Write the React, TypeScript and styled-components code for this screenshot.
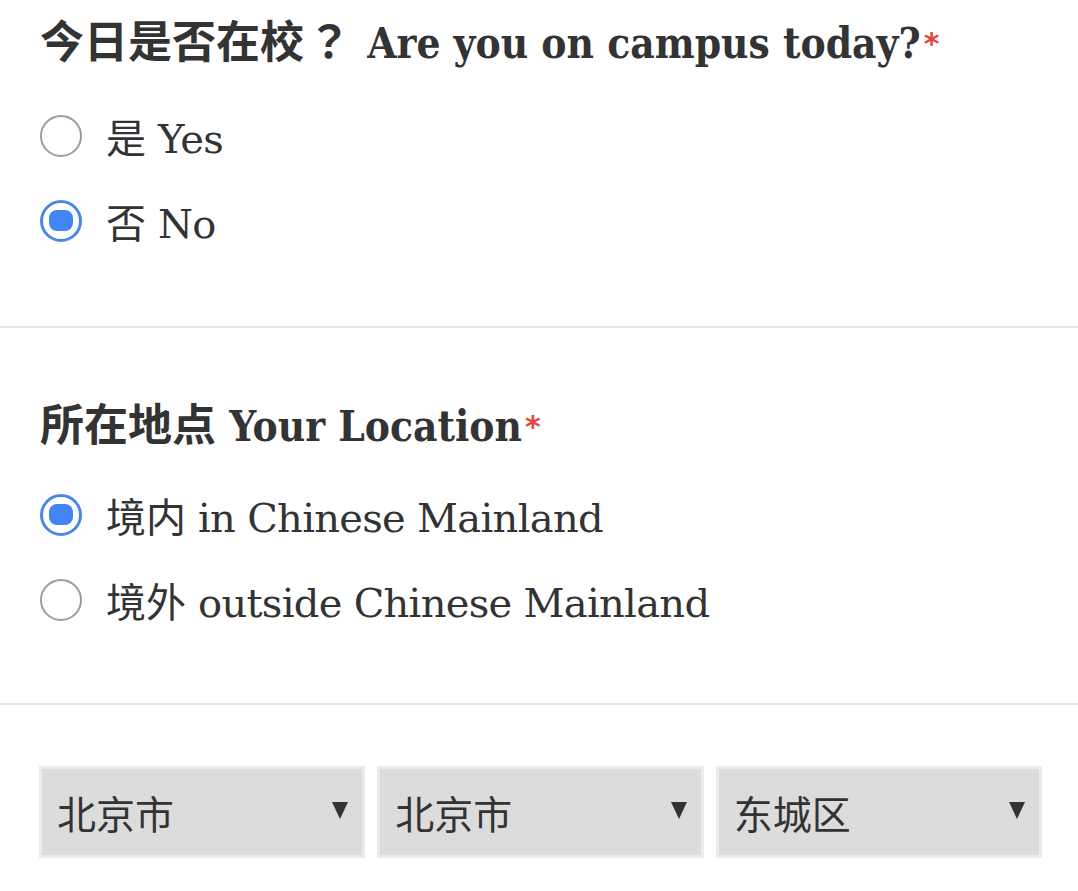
import React, { FC } from 'react';
import styled, { createGlobalStyle } from 'styled-components';

const GlobalStyle = createGlobalStyle`
  html, body {
    margin: 0;
    padding: 0;
    background: #ffffff;
  }
  body {
    font-family: "DejaVu Serif", "Noto Sans CJK SC", serif;
    color: #333333;
  }
`;

const Page = styled.div`
  width: 1078px;
  display: flex;
  flex-direction: column;
`;

const Section = styled.div<{ $top: number; $bottom: number }>`
  padding: ${(p) => p.$top}px 40px ${(p) => p.$bottom}px 40px;
  display: flex;
  flex-direction: column;
`;

const Divider = styled.div`
  height: 2px;
  background: #e6e6e6;
`;

const Title = styled.div<{ $gap: number }>`
  font-family: "DejaVu Serif Condensed", "DejaVu Serif", "Noto Sans CJK SC", serif;
  font-stretch: condensed;
  font-weight: bold;
  font-size: 42px;
  line-height: 50px;
  height: 50px;
  white-space: nowrap;
  letter-spacing: 0;
  margin-bottom: ${(p) => p.$gap}px;
`;

const Cjk = styled.span<{ $size: number; $bold?: boolean }>`
  font-family: "Noto Sans CJK SC", sans-serif;
  font-stretch: normal;
  font-size: ${(p) => p.$size}px;
  font-weight: ${(p) => (p.$bold ? 700 : 400)};
  letter-spacing: 0;
`;

const FullMark = styled.span`
  font-family: "Noto Sans CJK JP", sans-serif;
  font-stretch: normal;
  font-size: 44px;
  font-weight: 700;
  letter-spacing: 0;
  margin-left: 3px;
  margin-right: 3px;
`;

const Star = styled.span`
  color: #e2483d;
  font-family: "DejaVu Sans", sans-serif;
  font-stretch: normal;
  font-weight: bold;
  font-size: 30px;
  margin-left: 3px;
  position: relative;
  top: -4px;
`;

const Option = styled.label`
  display: flex;
  align-items: center;
  height: 85px;
  gap: 24px;
  cursor: pointer;
`;

const Radio = styled.span<{ $checked?: boolean }>`
  box-sizing: border-box;
  width: 42px;
  height: 42px;
  border-radius: 50%;
  border: ${(p) => (p.$checked ? '3px solid #4a88e6' : '2.5px solid #9c9c9c')};
  display: flex;
  align-items: center;
  justify-content: center;
  flex-shrink: 0;
  background: #fff;

  &::after {
    content: '';
    display: ${(p) => (p.$checked ? 'block' : 'none')};
    width: 24px;
    height: 21px;
    border-radius: 8px;
    background: #4285f4;
  }
`;

const OptionText = styled.span`
  font-family: "DejaVu Serif", "Noto Sans CJK SC", serif;
  font-size: 40px;
  letter-spacing: -0.7px;
  color: #333;
  white-space: nowrap;
`;

const SelectRow = styled.div`
  display: flex;
  gap: 12px;
  padding: 61px 36px 0 39px;
`;

const Select = styled.div`
  box-sizing: border-box;
  flex: 1;
  height: 92px;
  background: #dcdcdc;
  border: 3px solid #ebebeb;
  display: flex;
  align-items: center;
  justify-content: space-between;
  padding: 0 14px 0 15px;
`;

const SelectText = styled.span`
  font-family: "Noto Sans CJK SC", sans-serif;
  font-size: 39px;
  color: #333;
`;

const Arrow = styled.span`
  width: 0;
  height: 0;
  border-left: 8px solid transparent;
  border-right: 8px solid transparent;
  border-top: 17px solid #333;
  margin-bottom: 4px;
`;

type Opt = { cn: string; en: string; checked?: boolean };

const RadioGroup: FC<{ options: Opt[] }> = ({ options }) => (
  <>
    {options.map((o) => (
      <Option key={o.en}>
        <Radio $checked={o.checked} />
        <OptionText>
          <Cjk $size={40}>{o.cn}</Cjk> {o.en}
        </OptionText>
      </Option>
    ))}
  </>
);

const App: FC = () => {
  return (
    <Page>
      <GlobalStyle />
      <Section $top={14} $bottom={63}>
        <Title $gap={29}>
          <Cjk $size={44} $bold>今日是否在校</Cjk>
          <FullMark>？</FullMark> Are you on campus today?<Star>*</Star>
        </Title>
        <RadioGroup
          options={[
            { cn: '是', en: 'Yes' },
            { cn: '否', en: 'No', checked: true },
          ]}
        />
      </Section>
      <Divider />
      <Section $top={69} $bottom={61}>
        <Title $gap={25}>
          <Cjk $size={44} $bold>所在地点</Cjk> Your Location<Star>*</Star>
        </Title>
        <RadioGroup
          options={[
            { cn: '境内', en: 'in Chinese Mainland', checked: true },
            { cn: '境外', en: 'outside Chinese Mainland' },
          ]}
        />
      </Section>
      <Divider />
      <SelectRow>
        {['北京市', '北京市', '东城区'].map((v, i) => (
          <Select key={i}>
            <SelectText>{v}</SelectText>
            <Arrow />
          </Select>
        ))}
      </SelectRow>
    </Page>
  );
};

export default App;
